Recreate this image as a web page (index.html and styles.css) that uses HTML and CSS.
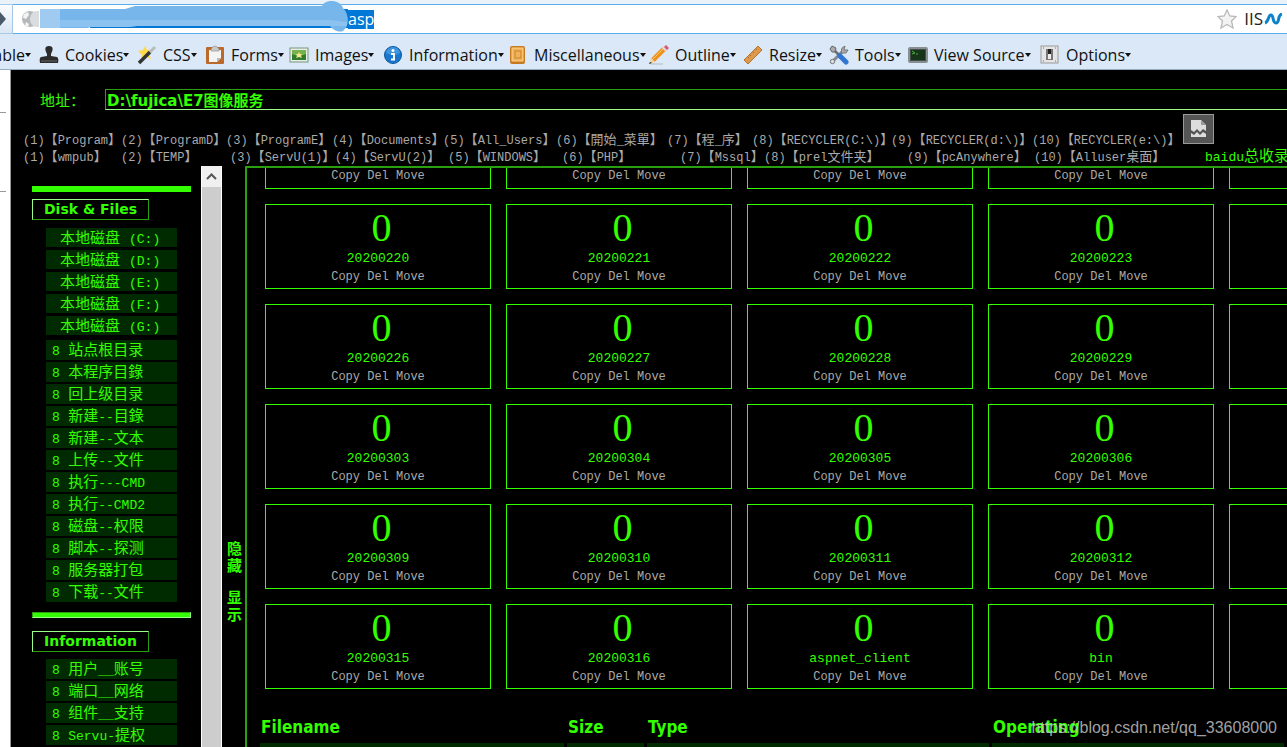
FILE: index.html
```html
<!DOCTYPE html>
<html lang="zh-CN">
<head>
<meta charset="utf-8">
<title>D:\fujica\E7图像服务</title>
<link rel="stylesheet" href="styles.css">
</head>
<body>
<header class="chrome">
  <div class="urlbar">
    <button class="forward" aria-label="Forward"><svg width="13" height="28" viewBox="0 0 13 28"><path d="M0 7 6 14 0 21Z" fill="#4a5a6b"/></svg></button>
    <div class="urlbox">
      <svg class="globe" width="18" height="18" viewBox="0 0 18 18"><circle cx="9" cy="9" r="8" fill="#b5b8ba"/><path d="M3 4 7 2 8 5 5 9 2 8ZM9 8 13 6 17 9 13 14 10 12ZM5 12 8 14 7 17 4 15Z" fill="#f2f3f4"/><path d="M14 1a9 9 0 0 0 0 16h4V1Z" fill="#d9dde0"/></svg>
      <svg class="mask" width="308" height="28" viewBox="40 5 308 28">
        <path d="M90 9H348V28H90Z" fill="#0078d7"/>
        <path d="M40 9H60V28H40Z" fill="#9fcbf0"/>
        <path d="M60 9H125L135 6H322C325 -1 340 -1 343 8C349 14 350 25 343 31C338 33 332 29 330 26H137L128 27H90L88 28H60Z" fill="#77b6ea"/>
        <path d="M60 20H330L347 22V26H137L128 27H60Z" fill="#8bc2ef"/>
      </svg>
      <input class="url" type="text" value="asp" aria-label="Address">
      <svg width="20" height="20" viewBox="0 0 20 20"><path d="M10 1 12.8 7 19 7.6 14.5 12 16 19 10 15.5 4 19 5.500 12 1 7.600 7.200 7Z" fill="#f3f3f3" stroke="#b9b9b9" stroke-width="1.300"/></svg>
      <span class="iis">IIS</span>
      <svg width="19" height="12" viewBox="0 0 19 12"><path d="M1 10C5 9 4 2 7 2S8 10 12 10 13 2 18 1" fill="none" stroke="#0c82cc" stroke-width="3"/></svg>
    </div>
  </div>
  <nav class="devbar">
    <button>able<i></i></button>
    <button><svg viewBox="0 0 20 20"><path d="M10 1C5 1 6 5 8 9V11L2 12Q0 13 1 18H19Q20 13 18 12L12 11V9C14 5 15 1 10 1Z" fill="#2c2c2c"/><path d="M2 16H18" stroke="#666"/></svg>Cookies<i></i></button>
    <button><svg viewBox="0 0 20 20"><path d="M8 1 10 5 15 5 12 9 14 14 9 12 4 15 5 10 1 6 6 5Z" fill="#ffd84a"/><path d="M2 18 13 7" stroke="#333" stroke-width="3.500"/><path d="M13 7 18 2" stroke="#bbb" stroke-width="3"/></svg>CSS<i></i></button>
    <button><svg viewBox="0 0 20 20"><rect x="1" y="2" width="18" height="17" rx="1" fill="#bb6a2c"/><path d="M4 5H16V13L12 17H4Z" fill="#f4f4f4"/><path d="M12 17V13H16Z" fill="#bbb"/><path d="M6 4Q10-2 14 4V6H6Z" fill="#c9c9c9" stroke="#888" stroke-width=".6"/></svg>Forms<i></i></button>
    <button><svg viewBox="0 0 20 20"><rect x="1" y="3" width="18" height="14" fill="#e8eee8" stroke="#76937d"/><rect x="3" y="5" width="14" height="10" fill="#2f7d2d"/><path d="M3 5H17V9Q10 12 3 9Z" fill="#76b34e"/><path d="M10 7 11 9 13 9 12 11 13 13 10 12 7 13 8 11 7 9H9Z" fill="#f3e58c"/></svg>Images<i></i></button>
    <button><svg viewBox="0 0 20 20"><circle cx="10" cy="10" r="8.500" fill="#1976cc" stroke="#0d569d"/><path d="M3 8a7 6 0 0 1 14 0Q10 12 3 8Z" fill="#5aa9e8" opacity=".6"/><circle cx="10" cy="5.500" r="1.500" fill="#fff"/><path d="M8 9H11V14H12M8 14.500H12" stroke="#fff" stroke-width="1.800" fill="none"/></svg>Information<i></i></button>
    <button><svg viewBox="0 0 20 20"><rect x="2" y="1" width="15" height="18" rx="2" fill="#c67a20"/><rect x="4" y="3" width="11" height="13" fill="#f1b158" stroke="#ffd28c"/><rect x="7" y="6" width="6" height="7" fill="none" stroke="#c98328"/></svg>Miscellaneous<i></i></button>
    <button><svg viewBox="0 0 20 20"><path d="M2 19H14" stroke="#bbb"/><path d="M4 15 15 4" stroke="#ef8f1c" stroke-width="5"/><path d="M4 14 14 4" stroke="#ffcb66"/><path d="M14 2 18 6" stroke="#ddd" stroke-width="3"/><path d="M16 1 19 4" stroke="#dd5875" stroke-width="3"/><path d="M2 13 6 17 1 19Z" fill="#efd2a0"/><path d="M1 17 3 18 0 19Z" fill="#222"/></svg>Outline<i></i></button>
    <button><svg viewBox="0 0 20 20"><path d="M15 1 19 5 5 19 1 15Z" fill="#dc9a4e" stroke="#b87529"/><path d="M5 12 6 13M7 10 8 11M10 7 11 8M13 4 14 5" stroke="#a8692a"/></svg>Resize<i></i></button>
    <button><svg viewBox="0 0 20 20"><path d="M4 16 15 5" stroke="#85888d" stroke-width="3"/><path d="M13 3 16 1 15 5 19 5 17 8 12 8Z" fill="#a9abad" stroke="#777"/><circle cx="3.500" cy="16.500" r="2.200" fill="#ddd" stroke="#777"/><path d="M4 4 12 12" stroke="#6b6f75" stroke-width="2.500"/><path d="M1 4 3 1 7 3 6 7 3 7Z" fill="#aaa" stroke="#666"/><path d="M11 11 17 17" stroke="#2e76d2" stroke-width="5" stroke-linecap="round"/></svg>Tools<i></i></button>
    <button><svg viewBox="0 0 20 20"><rect x="1" y="3" width="18" height="14" rx="1" fill="#444e4a" stroke="#888f92" stroke-width="2"/><rect x="3" y="5" width="14" height="10" fill="#173319"/><path d="M4 6 7 8 4 9M8 9H10" stroke="#4caf3c" fill="none"/></svg>View Source<i></i></button>
    <button><svg viewBox="0 0 20 20"><rect x="1" y="1" width="17" height="17" fill="#e5e5e5" stroke="#999"/><rect x="6" y="4" width="7" height="11" fill="#777"/><rect x="8" y="4" width="3" height="7" fill="#222"/><rect x="8" y="9" width="3" height="5" fill="#eee"/><path d="M3 3H4M15 3H16M3 16H4M15 16H16" stroke="#777"/></svg>Options<i></i></button>
  </nav>
</header>
<div class="page">
  <div class="edge"><hr><hr></div>
  <main class="shell">
    <form class="address"><label for="path">地址：</label><input id="path" type="text" value="D:\fujica\E7图像服务"></form>
    <div class="shortcuts">
      <nav>
        <div class="row first">
          <a href="#"><b>(1)</b>【<b>Program</b>】</a><a href="#"><b>(2)</b>【<b>ProgramD</b>】</a><a href="#"><b>(3)</b>【<b>ProgramE</b>】</a><a href="#"><b>(4)</b>【<b>Documents</b>】</a><a href="#"><b>(5)</b>【<b>All_Users</b>】</a><a href="#"><b>(6)</b>【開始<b>_</b>菜單】</a><a href="#"><b>(7)</b>【程<b>_</b>序】</a><a href="#"><b>(8)</b>【<b>RECYCLER(C:\)</b>】</a><a href="#"><b>(9)</b>【<b>RECYCLER(d:\)</b>】</a><a href="#"><b>(10)</b>【<b>RECYCLER(e:\)</b>】</a>
        </div>
        <div class="row second">
          <a href="#"><b>(1)</b>【<b>wmpub</b>】</a><a href="#"><b>(2)</b>【<b>TEMP</b>】</a><a href="#"><b>(3)</b>【<b>ServU(1)</b>】</a><a href="#"><b>(4)</b>【<b>ServU(2)</b>】</a><a href="#"><b>(5)</b>【<b>WINDOWS</b>】</a><a href="#"><b>(6)</b>【<b>PHP</b>】</a><a href="#"><b>(7)</b>【<b>Mssql</b>】</a><a href="#"><b>(8)</b>【<b>prel</b>文件夹】</a><a href="#"><b>(9)</b>【<b>pcAnywhere</b>】</a><a href="#"><b>(10)</b>【<b>Alluser</b>桌面】</a>
        </div>
      </nav>
      <aside>
        <svg class="broken" width="31" height="30" viewBox="0 0 31 30"><rect x=".5" y=".5" width="30" height="29" fill="#555" stroke="#999"/><path d="M8 6H18L23 11V17L20 15 17 18 14 15 11 18 8 16Z" fill="#ddd"/><path d="M18 6V11H23Z" fill="#999"/><path d="M8 19 11 21 14 18 17 21 20 18 23 20V23H8Z" fill="#ddd"/></svg>
        <a href="#"><b>baidu</b>总收录</a>
      </aside>
    </div>
    <div class="work">
      <nav class="side">
        <div class="bar"></div>
        <h2>Disk &amp; Files</h2>
        <div class="disks">
          <a href="#">本地磁盘<b>(C:)</b></a><a href="#">本地磁盘<b>(D:)</b></a><a href="#">本地磁盘<b>(E:)</b></a><a href="#">本地磁盘<b>(F:)</b></a><a href="#">本地磁盘<b>(G:)</b></a>
        </div>
        <div class="menu">
          <a href="#"><b>8</b> 站点根目录</a><a href="#"><b>8</b> 本程序目錄</a><a href="#"><b>8</b> 回上级目录</a><a href="#"><b>8</b> 新建<b>--</b>目錄</a><a href="#"><b>8</b> 新建<b>--</b>文本</a><a href="#"><b>8</b> 上传<b>--</b>文件</a><a href="#"><b>8</b> 执行<b>---CMD</b></a><a href="#"><b>8</b> 执行<b>--CMD2</b></a><a href="#"><b>8</b> 磁盘<b>--</b>权限</a><a href="#"><b>8</b> 脚本<b>--</b>探测</a><a href="#"><b>8</b> 服务器打包</a><a href="#"><b>8</b> 下载<b>--</b>文件</a>
        </div>
        <div class="bar inset"></div>
        <h2>Information</h2>
        <div class="menu">
          <a href="#"><b>8</b> 用户<b>__</b>账号</a><a href="#"><b>8</b> 端口<b>__</b>网络</a><a href="#"><b>8</b> 组件<b>__</b>支持</a><a href="#"><b>8</b> <b>Servu-</b>提权</a>
        </div>
      </nav>
      <div class="scroll"><button aria-label="Scroll up"><svg width="11" height="7" viewBox="0 0 11 7"><path d="M1 6 5.500 1.500 10 6" fill="none" stroke="#555" stroke-width="2"/></svg></button></div>
      <div class="toggle"><button>隐藏</button><button>显示</button></div>
      <section class="files">
        <div class="grid">
          <article class="cut"><p>Copy Del Move</p></article>
          <article class="cut"><p>Copy Del Move</p></article>
          <article class="cut"><p>Copy Del Move</p></article>
          <article class="cut"><p>Copy Del Move</p></article>
          <article class="cut"></article>
          <article><a class="ico" href="#">0</a><a class="name" href="#">20200220</a><p>Copy Del Move</p></article>
          <article><a class="ico" href="#">0</a><a class="name" href="#">20200221</a><p>Copy Del Move</p></article>
          <article><a class="ico" href="#">0</a><a class="name" href="#">20200222</a><p>Copy Del Move</p></article>
          <article><a class="ico" href="#">0</a><a class="name" href="#">20200223</a><p>Copy Del Move</p></article>
          <article></article>
          <article><a class="ico" href="#">0</a><a class="name" href="#">20200226</a><p>Copy Del Move</p></article>
          <article><a class="ico" href="#">0</a><a class="name" href="#">20200227</a><p>Copy Del Move</p></article>
          <article><a class="ico" href="#">0</a><a class="name" href="#">20200228</a><p>Copy Del Move</p></article>
          <article><a class="ico" href="#">0</a><a class="name" href="#">20200229</a><p>Copy Del Move</p></article>
          <article></article>
          <article><a class="ico" href="#">0</a><a class="name" href="#">20200303</a><p>Copy Del Move</p></article>
          <article><a class="ico" href="#">0</a><a class="name" href="#">20200304</a><p>Copy Del Move</p></article>
          <article><a class="ico" href="#">0</a><a class="name" href="#">20200305</a><p>Copy Del Move</p></article>
          <article><a class="ico" href="#">0</a><a class="name" href="#">20200306</a><p>Copy Del Move</p></article>
          <article></article>
          <article><a class="ico" href="#">0</a><a class="name" href="#">20200309</a><p>Copy Del Move</p></article>
          <article><a class="ico" href="#">0</a><a class="name" href="#">20200310</a><p>Copy Del Move</p></article>
          <article><a class="ico" href="#">0</a><a class="name" href="#">20200311</a><p>Copy Del Move</p></article>
          <article><a class="ico" href="#">0</a><a class="name" href="#">20200312</a><p>Copy Del Move</p></article>
          <article></article>
          <article><a class="ico" href="#">0</a><a class="name" href="#">20200315</a><p>Copy Del Move</p></article>
          <article><a class="ico" href="#">0</a><a class="name" href="#">20200316</a><p>Copy Del Move</p></article>
          <article><a class="ico" href="#">0</a><a class="name" href="#">aspnet_client</a><p>Copy Del Move</p></article>
          <article><a class="ico" href="#">0</a><a class="name" href="#">bin</a><p>Copy Del Move</p></article>
          <article></article>
        </div>
        <table>
          <colgroup><col class="c1"><col class="c2"><col class="c3"><col></colgroup>
          <thead><tr><th>Filename</th><th>Size</th><th>Type</th><th>Operating</th></tr></thead>
          <tbody><tr><td></td><td></td><td></td><td></td></tr></tbody>
        </table>
      </section>
    </div>
  </main>
</div>
<div class="watermark">https://blog.csdn.net/qq_33608000</div>
</body>
</html>
```

FILE: styles.css
```css
* { box-sizing: border-box; }
body {
  margin: 0;
  height: 100vh;
  overflow: hidden;
  display: flex;
  flex-direction: column;
  background: #fff;
  font-family: "Noto Sans CJK SC", sans-serif;
}
a { color: inherit; text-decoration: none; }
button { border: 0; padding: 0; background: none; color: inherit; font: inherit; }
b { font-family: "Liberation Mono", monospace; font-weight: 400; }

.chrome { flex: none; background: #dae8f8; border-bottom: 1px solid #99abbe; }
.urlbar { display: flex; padding-top: 4px; background: #e9f1f9; }
.forward { width: 13px; height: 30px; border: 1px solid #a9c8e6; border-width: 1px 1px 1px 0; background: linear-gradient(#fafcfe, #d9e7f5); }
.forward svg { display: block; }
.urlbox {
  flex: 1;
  display: flex;
  align-items: center;
  height: 30px;
  padding: 0 4px 0 8px;
  border: 1px solid #5aaef0;
  border-width: 1px 0;
  background: #fff;
}
.globe { margin-right: 1px; }
.mask { overflow: visible; position: relative; }
.url {
  flex: 1;
  min-width: 0;
  height: 19px;
  border: 0;
  padding: 0;
  outline: 0;
  color: #fff;
  font: 16px/19px "Open Sans", sans-serif;
  background: linear-gradient(#0078d7, #0078d7) 0 0 / 26px 19px no-repeat;
}
.iis { margin: 0 1px 0 7px; font: 17px/20px "Open Sans", sans-serif; color: #222; }
.devbar {
  display: grid;
  grid-template-columns: 39px 98px 68px 84px 94px 125px 141px 94px 86px 79px 132px 1fr;
  height: 35px;
  padding-top: 7px;
  color: #111;
}
.devbar button { display: flex; align-items: center; height: 28px; font: 16px/28px "Open Sans", sans-serif; white-space: nowrap; }
.devbar button:first-child { justify-content: flex-end; padding-right: 8px; }
.devbar svg { width: 20px; height: 20px; margin-right: 6px; flex: none; }
.devbar i { border: 3px solid transparent; border-top: 4px solid #111; border-bottom: 0; }

.page { flex: 1; min-height: 0; display: flex; }
.edge { width: 11px; flex: none; border-right: 1px solid #999; }
.edge hr { width: 6px; height: 1px; border: 0; margin: 42px 0 78px; background: #999; }
.shell { flex: 1; min-width: 0; display: flex; flex-direction: column; background: #000; color: #3f0; overflow: hidden; }

.address { display: flex; align-items: center; padding: 19px 0 0 29px; }
.address label { width: 65px; font-size: 15px; line-height: 20px; }
.address input {
  flex: 1;
  height: 21px;
  padding: 0 1px;
  border: 1px solid #2a9f10;
  border-bottom-color: #9f8;
  border-right: 0;
  background: #000;
  color: #3f0;
  outline: 0;
  font: bold 15px/18px "DejaVu Sans", "Noto Sans CJK SC", sans-serif;
}
.shortcuts { display: flex; height: 56px; color: #aaa; font-size: 13px; line-height: 17px; }
.shortcuts nav { width: 1172px; flex: none; padding: 20px 0 0 12px; }
.row { display: grid; height: 17px; white-space: nowrap; }
.row a { display: block; height: 17px; }
.row b { font-size: 12px; }
.first { grid-template-columns: 98px 105px 106px 111px 113px 111px 85px 139px 141px 1fr; }
.second { grid-template-columns: 98px 109px 105px 113px 114px 118px 84px 143px 127px 1fr; }
.shortcuts aside { flex: 1; min-width: 0; padding-top: 4px; white-space: nowrap; }
.broken { display: block; }
.shortcuts aside a { display: block; padding: 2px 0 0 22px; font-size: 15px; color: #3f0; }
aside b, .side b { font-size: 13px; }

.work { flex: 1; min-height: 0; display: flex; }
.side { width: 190px; flex: none; padding: 20px 10px 0 21px; overflow: hidden; font-size: 15px; line-height: 17px; }
.bar { height: 6px; background: #3f0; }
.inset { margin-top: 10px; border: 1px solid #2a9f10; border-right-color: #9f8; border-bottom-color: #9f8; }
.side h2 {
  width: fit-content;
  margin: 7px 0 8px;
  padding: 0 11px;
  border: 1px solid #9f8;
  border-right-color: #2a9f10;
  border-bottom-color: #2a9f10;
  font: bold 14px/19px "DejaVu Sans", sans-serif;
}
.inset + h2 { margin: 13px 0 7px; }
.disks, .menu { display: grid; gap: 3px; margin: 0 14px; }
.disks a { height: 19px; padding-left: 14px; background: #002b00; white-space: nowrap; }
.disks b { margin-left: 9px; }
.menu { gap: 2px; }
.disks + .menu { margin-top: 5px; }
.menu a { height: 20px; padding-left: 6px; background: #002b00; white-space: nowrap; }
.menu b:first-child { margin-right: 5px; }

.scroll { width: 21px; flex: none; background: #cdcdcd; border: 1px solid #fff; border-width: 0 1px; }
.scroll button { display: grid; place-items: center; width: 100%; height: 21px; background: #f0f0f0; }
.toggle { width: 23px; flex: none; display: flex; flex-direction: column; gap: 15px; padding: 373px 3px 0 5px; font-size: 15px; }
.toggle button { font-weight: 700; line-height: 17px; }

.files { flex: 1; min-width: 0; overflow: hidden; border: 2px solid #2a9f10; border-width: 2px 0 0 2px; }
.grid { display: grid; grid-template-columns: repeat(5, 226px); grid-template-rows: 21px; grid-auto-rows: 85px; gap: 15px; margin-left: 18px; }
article { border: 1px solid #3f0; text-align: center; font-family: "Liberation Mono", monospace; }
article .ico { display: block; height: 44px; padding: 1px 0 0 7px; font: 40px/44px "Liberation Serif", serif; }
article .name { display: block; font-size: 13px; line-height: 20px; }
article p { margin: 0; font-size: 12px; line-height: 16px; color: #aaa; }
article.cut { border-top: 0; }
.files table { width: 100%; margin-top: 21px; table-layout: fixed; border-spacing: 3px; padding-left: 10px; border-collapse: separate; }
.c1 { width: 304px; }
.c2 { width: 77px; }
.c3 { width: 342px; }
th { height: 27px; padding: 0 1px; text-align: left; font: bold 17px/24px "DejaVu Sans Condensed", "DejaVu Sans", sans-serif; }
td { height: 20px; padding: 0; background: #002b00; }
.watermark { position: absolute; right: 10px; bottom: 9px; font: 16px/20px "Liberation Sans", sans-serif; color: rgba(205, 205, 205, .8); }
```
